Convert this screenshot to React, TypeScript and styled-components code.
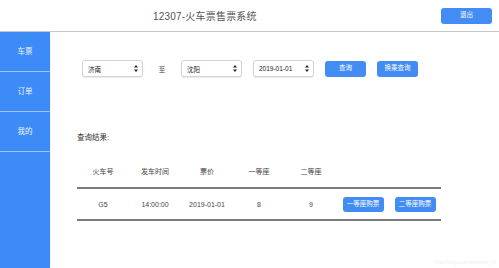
import React from 'react';
import styled, { createGlobalStyle } from 'styled-components';

const GlobalStyle = createGlobalStyle`
  html, body {
    margin: 0;
    padding: 0;
    background: #fff;
  }
  body {
    font-family: "Liberation Sans", "Noto Sans CJK SC", sans-serif;
    color: #444;
  }
`;

const Page = styled.div`
  width: 499px;
  height: 268px;
  display: flex;
  flex-direction: column;
  overflow: hidden;
  position: relative;
`;

const Header = styled.header`
  height: 31px;
  border-bottom: 1px solid #c9c9c9;
  display: flex;
  align-items: center;
  justify-content: space-between;
  padding: 0 7px 0 153px;
  flex-shrink: 0;
`;

const Title = styled.h1`
  margin: 0;
  font-size: 10px;
  font-weight: 400;
  color: #555;
  letter-spacing: 0.2px;
`;

const Button = styled.button<{ $w?: number; $h?: number }>`
  width: ${(p) => p.$w ?? 41}px;
  height: ${(p) => p.$h ?? 16}px;
  padding: 0;
  border: none;
  border-radius: 3px;
  background: #428cf4;
  color: #fff;
  font-family: inherit;
  font-size: 6.5px;
  line-height: 1;
  cursor: pointer;
`;

const Body = styled.div`
  flex: 1;
  display: flex;
`;

const Sidebar = styled.nav`
  width: 50px;
  background: #3d8bf6;
  display: flex;
  flex-direction: column;
  box-shadow: 1px 0 2px rgba(0, 0, 0, 0.06);
`;

const NavItem = styled.div`
  height: 40px;
  border-bottom: 1px solid #9fc5fa;
  display: flex;
  align-items: center;
  justify-content: center;
  color: #eef5ff;
  font-size: 7.5px;
  padding-bottom: 2px;
  box-sizing: border-box;
`;

const Content = styled.main`
  flex: 1;
  padding: 28px 0 0 27px;
`;

const SearchRow = styled.div`
  display: flex;
  align-items: center;
  gap: 11px;
  margin-left: 5px;
  height: 17px;
`;

const Select = styled.div`
  width: 61px;
  height: 17px;
  box-sizing: border-box;
  border: 1px solid #d3d3d3;
  border-radius: 3px;
  background: #fff;
  box-shadow: 0 1px 1px rgba(0, 0, 0, 0.08);
  display: flex;
  align-items: center;
  justify-content: space-between;
  padding: 0 4px 0 5px;
  font-size: 6.5px;
  color: #222;
`;

const To = styled.span`
  width: 16px;
  text-align: center;
  font-size: 6.5px;
  color: #444;
`;

const ResultTitle = styled.div`
  margin-top: 56px;
  font-size: 7.5px;
  line-height: 10px;
  color: #333;
`;

const Table = styled.div`
  margin-top: 12px;
  width: 364px;
`;

const Row = styled.div<{ $h: number }>`
  display: grid;
  grid-template-columns: repeat(7, 52px);
  height: ${(p) => p.$h}px;
  align-items: center;
  border-bottom: 2px solid #7a7a7a;
`;

const Cell = styled.div`
  text-align: center;
  font-size: 7px;
  color: #444;
  display: flex;
  justify-content: center;
`;

const Watermark = styled.div`
  position: absolute;
  right: 3px;
  bottom: 3px;
  font-size: 4.5px;
  color: #f0f0f0;
`;

function Arrows() {
  return (
    <svg width="4" height="7" viewBox="0 0 4 7">
      <path d="M2 0 L4 2.6 H0 Z M2 7 L4 4.4 H0 Z" fill="#222" />
    </svg>
  );
}

function Dropdown({ value }: { value: string }) {
  return (
    <Select>
      <span>{value}</span>
      <Arrows />
    </Select>
  );
}

export default function App() {
  return (
    <Page>
      <GlobalStyle />
      <Header>
        <Title>12307-火车票售票系统</Title>
        <Button $w={51} $h={16}>退出</Button>
      </Header>
      <Body>
        <Sidebar>
          <NavItem>车票</NavItem>
          <NavItem>订单</NavItem>
          <NavItem>我的</NavItem>
        </Sidebar>
        <Content>
          <SearchRow>
            <Dropdown value="济南" />
            <To>至</To>
            <Dropdown value="沈阳" />
            <Dropdown value="2019-01-01" />
            <Button>查询</Button>
            <Button>换乘查询</Button>
          </SearchRow>
          <ResultTitle>查询结果:</ResultTitle>
          <Table>
            <Row $h={32}>
              <Cell>火车号</Cell>
              <Cell>发车时间</Cell>
              <Cell>票价</Cell>
              <Cell>一等座</Cell>
              <Cell>二等座</Cell>
              <Cell />
              <Cell />
            </Row>
            <Row $h={30}>
              <Cell>G5</Cell>
              <Cell>14:00:00</Cell>
              <Cell>2019-01-01</Cell>
              <Cell>8</Cell>
              <Cell>9</Cell>
              <Cell>
                <Button $h={15}>一等座购票</Button>
              </Cell>
              <Cell>
                <Button $h={15}>二等座购票</Button>
              </Cell>
            </Row>
          </Table>
        </Content>
      </Body>
      <Watermark>https://blog.csdn.net/weixin_43</Watermark>
    </Page>
  );
}
